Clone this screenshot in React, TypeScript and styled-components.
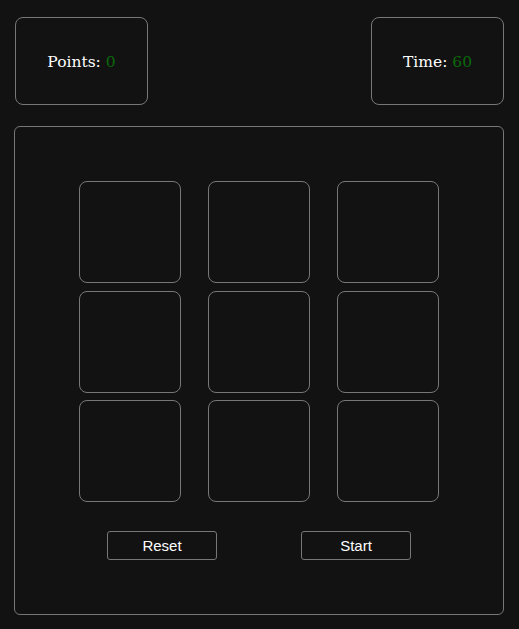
import React from "react";
import styled, { createGlobalStyle } from "styled-components";

const GlobalStyle = createGlobalStyle`
  html, body {
    margin: 0;
    padding: 0;
    background: #121212;
  }
`;

export default function App() {
  const cells = Array.from({ length: 9 }, (_, i) => i);

  return (
    <Page>
      <GlobalStyle />
      <ScoreRow>
        <ScoreBox>
          Points: <Value>0</Value>
        </ScoreBox>
        <ScoreBox>
          Time: <Value>60</Value>
        </ScoreBox>
      </ScoreRow>
      <Board>
        <Grid>
          {cells.map(i => <Cell key={i} />)}
        </Grid>
        <Controls>
          <Button>Reset</Button>
          <Button>Start</Button>
        </Controls>
      </Board>
    </Page>
  );
}

const Page = styled.div`
  display: flex;
  flex-direction: column;
  gap: 21px;
  width: 490px;
  padding: 17px 0 0 14px;
`;

const ScoreRow = styled.div`
  display: flex;
  justify-content: space-between;
  padding-left: 1px;
`;

const ScoreBox = styled.div`
  box-sizing: border-box;
  width: 133px;
  height: 88px;
  display: flex;
  align-items: center;
  justify-content: center;
  padding-top: 2px;
  white-space: pre;
  border: 1px solid #777;
  border-radius: 8px;
  color: #fff;
  font-family: "DejaVu Serif", serif;
  font-size: 15.5px;
`;

const Value = styled.span`
  color: #0a6a0a;
`;

const Board = styled.div`
  box-sizing: border-box;
  height: 489px;
  display: flex;
  flex-direction: column;
  align-items: center;
  padding-top: 54px;
  gap: 29px;
  border: 1px solid #777;
  border-radius: 6px;
`;

const Grid = styled.div`
  display: grid;
  grid-template-columns: repeat(3, 102px);
  grid-auto-rows: 102px;
  column-gap: 27px;
  row-gap: 7.5px;
`;

const Cell = styled.div`
  box-sizing: border-box;
  border: 1px solid #777;
  border-radius: 8px;
`;

const Controls = styled.div`
  display: flex;
  gap: 84px;
`;

const Button = styled.button`
  box-sizing: border-box;
  width: 110px;
  height: 29px;
  background: transparent;
  border: 1px solid #777;
  border-radius: 3px;
  color: #fff;
  font-family: "Liberation Sans", Arial, sans-serif;
  font-size: 15px;
  padding: 0;
  cursor: pointer;
`;
